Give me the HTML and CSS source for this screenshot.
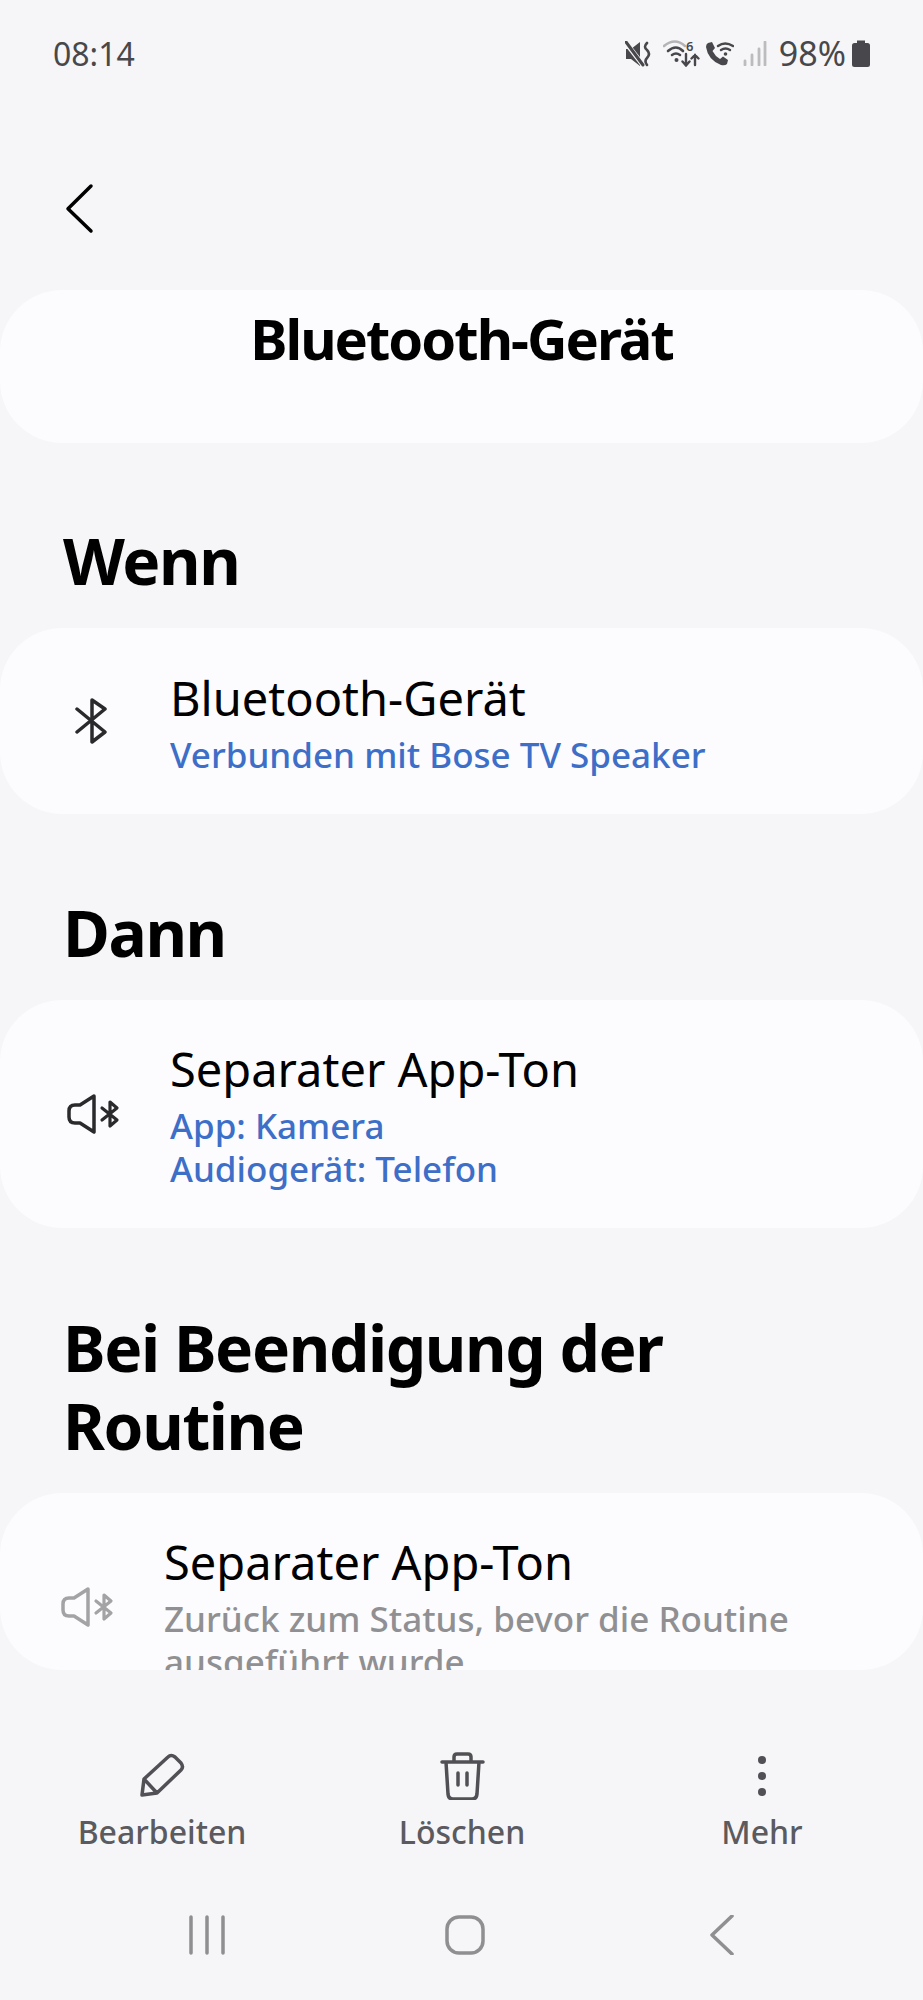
FILE: index.html
```html
<!DOCTYPE html>
<html lang="de">
<head>
  <meta charset="UTF-8" />
  <title>Bluetooth-Gerät</title>
  <link rel="stylesheet" href="styles.css">
</head>
<body>
  <div class="screen">
    <div class="statusbar">
      <span class="time">08:14</span>
      <div class="status-icons">
        <svg class="ic-mute" width="27" height="26" viewBox="0 0 27 26">
          <path d="M1 8 H6 L15 1 V25 L6 18 H1 Z" fill="#48484c"/>
          <path d="M1 2 L18 24" stroke="#f6f6f8" stroke-width="5"/>
          <path d="M1 1 L18 24" stroke="#48484c" stroke-width="3" stroke-linecap="round"/>
          <path d="M22 2 Q18 6 22 9 Q26 13 22 17 Q19 20 22 24" stroke="#48484c" stroke-width="2.6" fill="none" stroke-linecap="round"/>
        </svg>
        <svg class="ic-wifi6" width="38" height="27" viewBox="0 0 38 27">
          <path d="M1 6 Q12 -3 22 6" stroke="#b4b4b7" stroke-width="2.6" fill="none" stroke-linecap="round"/>
          <path d="M5 11 Q13 4 20 11 M9 15 Q13 12 17 15" stroke="#48484c" stroke-width="2.6" fill="none" stroke-linecap="round"/>
          <circle cx="13.500" cy="20" r="2" fill="#48484c"/>
          <text x="23" y="11" class="wifi-six">6</text>
          <path d="M23 14 V25 M19.500 21.500 L23 25.500 L26.500 21.500 M32 25 V15 M28.500 18.500 L32 15 L35.500 18.500" stroke="#48484c" stroke-width="2.4" fill="none" stroke-linecap="round"/>
        </svg>
        <svg class="ic-callwifi" width="29" height="26" viewBox="0 0 29 26">
          <path d="M3 2 L7 1 L10 7 L7.500 10 Q10 15 15 18 L18 15.500 L23 19 L22 23 Q20 25 16 24 Q3 19 1 6 Q1 3 3 2 Z" fill="#48484c"/>
          <path d="M13 5 Q20 0 28 5 M16 9 Q20.500 6 25 9" stroke="#48484c" stroke-width="2.4" fill="none" stroke-linecap="round"/>
          <circle cx="20.500" cy="13" r="1.800" fill="#48484c"/>
        </svg>
        <svg class="ic-signal" width="24" height="25" viewBox="0 0 24 25">
          <path d="M2 24 V20 M9 24 V14 M16 24 V8 M22 24 V1" stroke="#bcbcbf" stroke-width="2.800" stroke-linecap="round"/>
        </svg>
        <span class="battery-text">98%</span>
        <svg class="ic-battery" width="18" height="27" viewBox="0 0 18 27">
          <path d="M5 0.500 H13 V3 H15.500 Q18 3 18 5.500 V24.500 Q18 27 15.500 27 H2.500 Q0 27 0 24.500 V5.500 Q0 3 2.500 3 H5 Z" fill="#48484c"/>
        </svg>
      </div>
    </div>

    <div class="backrow">
      <svg width="30" height="52" viewBox="0 0 30 52">
        <path d="M26 3 L3 25.700 L26 48" stroke="#000" stroke-width="3.500" fill="none" stroke-linecap="round" stroke-linejoin="round"/>
      </svg>
    </div>

    <div class="card title-card">
      <span class="page-title">Bluetooth-Gerät</span>
    </div>

    <h2 class="section-title first">Wenn</h2>
    <div class="card row-card row-if">
      <div class="row-icon">
        <svg width="32" height="46" viewBox="0 0 32 46">
          <path d="M2 11 L30 34 L17 44 V2 L30 11 L2 34" stroke="#2a2a2c" stroke-width="3.500" fill="none" stroke-linecap="round" stroke-linejoin="round"/>
        </svg>
      </div>
      <div class="row-text">
        <div class="row-title">Bluetooth-Gerät</div>
        <div class="row-sub">Verbunden mit Bose TV Speaker</div>
      </div>
    </div>

    <h2 class="section-title">Dann</h2>
    <div class="card row-card row-then">
      <div class="row-icon speaker">
        <svg width="54" height="42" viewBox="0 0 54 42">
          <path d="M28 3 L14 12 H9 Q3 12 3 18 V24 Q3 30 9 30 H14 L28 39 Z" stroke="#2a2a2c" stroke-width="3.500" fill="none" stroke-linejoin="round"/>
          <path d="M36 15 L51 27 L44 33 V9 L51 15 L36 27" stroke="#2a2a2c" stroke-width="3.200" fill="none" stroke-linecap="round" stroke-linejoin="round"/>
        </svg>
      </div>
      <div class="row-text">
        <div class="row-title">Separater App-Ton</div>
        <div class="row-sub">App: Kamera</div>
        <div class="row-sub">Audiogerät: Telefon</div>
      </div>
    </div>

    <h2 class="section-title two-line">Bei Beendigung der<br>Routine</h2>
    <div class="card row-end">
      <div class="row-card row-end-inner">
        <div class="row-icon speaker-end">
          <svg width="54" height="42" viewBox="0 0 54 42">
            <path d="M28 3 L14 12 H9 Q3 12 3 18 V24 Q3 30 9 30 H14 L28 39 Z" stroke="#a3a3a6" stroke-width="3.500" fill="none" stroke-linejoin="round"/>
            <path d="M36 15 L51 27 L44 33 V9 L51 15 L36 27" stroke="#a3a3a6" stroke-width="3.200" fill="none" stroke-linecap="round" stroke-linejoin="round"/>
          </svg>
        </div>
        <div class="row-text">
          <div class="row-title">Separater App-Ton</div>
          <div class="row-sub grey">Zurück zum Status, bevor die Routine ausgeführt wurde</div>
        </div>
      </div>
    </div>

    <div class="actions">
      <div class="action">
        <svg width="46" height="48" viewBox="0 0 46 48">
          <path d="M5 27 L29 5 Q32 2 36 5 L42 11 Q45 15 42 18 L18 41 L3 43 Z M5 27 L18 41" stroke="#505055" stroke-width="3.500" fill="none" stroke-linejoin="round"/>
        </svg>
        <span>Bearbeiten</span>
      </div>
      <div class="action">
        <svg width="46" height="48" viewBox="0 0 46 48">
          <path d="M3 10 H44 M15 10 V5 Q15 2 18 2 H29 Q32 2 32 5 V10 M7 10 L9 42 Q9.500 47 14 47 H33 Q37.500 47 38 42 L40 10 M19 21 V33 M28 21 V33" stroke="#505055" stroke-width="3.500" fill="none" stroke-linecap="round" stroke-linejoin="round"/>
        </svg>
        <span>Löschen</span>
      </div>
      <div class="action">
        <svg width="46" height="48" viewBox="0 0 46 48">
          <circle cx="23" cy="8" r="4" fill="#505055"/>
          <circle cx="23" cy="24" r="4" fill="#505055"/>
          <circle cx="23" cy="40" r="4" fill="#505055"/>
        </svg>
        <span>Mehr</span>
      </div>
    </div>

    <div class="navbar">
      <div class="nav-item">
        <svg width="40" height="40" viewBox="0 0 40 40">
          <path d="M4 2 V38 M20 2 V38 M36 2 V38" stroke="#8f8f91" stroke-width="3.500" stroke-linecap="round"/>
        </svg>
      </div>
      <div class="nav-item">
        <svg width="40" height="40" viewBox="0 0 40 40">
          <rect x="2" y="2" width="36" height="36" rx="12" stroke="#8f8f91" stroke-width="3.500" fill="none"/>
        </svg>
      </div>
      <div class="nav-item">
        <svg width="40" height="40" viewBox="0 0 40 40">
          <path d="M29 1 L9 20 L29 39" stroke="#8f8f91" stroke-width="3.500" fill="none" stroke-linecap="round" stroke-linejoin="round"/>
        </svg>
      </div>
    </div>
  </div>
</body>
</html>
```

FILE: styles.css
```css
* {
  box-sizing: border-box;
}
body {
  margin: 0;
  background: #f6f6f8;
  font-family: "Noto Sans", "Open Sans", sans-serif;
  color: #000;
}
.screen {
  width: 923px;
  height: 2000px;
  overflow: hidden;
}
.statusbar {
  height: 107px;
  padding: 40px 53px 0 53px;
  display: flex;
  justify-content: space-between;
  align-items: flex-start;
  color: #48484c;
}
.time {
  font-size: 32px;
  line-height: 27px;
}
.status-icons {
  display: flex;
  align-items: center;
  height: 27px;
}
.ic-mute {
  margin-right: 11px;
}
.ic-wifi6 {
  margin-right: 4px;
}
.ic-callwifi {
  margin-right: 9px;
}
.ic-signal {
  margin-right: 12px;
}
.battery-text {
  font-size: 34px;
  line-height: 27px;
  margin-right: 6px;
}
.wifi-six {
  font-size: 13px;
  font-weight: 600;
  fill: #48484c;
}
.backrow {
  height: 183px;
  padding: 76px 0 0 65px;
}
.card {
  background: #fcfcfe;
  border-radius: 62px;
}
.title-card {
  height: 153px;
  display: flex;
  justify-content: center;
  padding-top: 8px;
}
.page-title {
  font-size: 56px;
  font-weight: 700;
  line-height: 80px;
  letter-spacing: -2px;
}
.section-title {
  margin: 79px 0 27px;
  padding: 0 0 0 63px;
  font-size: 64px;
  font-weight: 700;
  line-height: 80px;
  letter-spacing: -1.4px;
}
.section-title.first {
  margin: 78px 0 27px;
}
.section-title.two-line {
  margin: 81px 0 28px;
  line-height: 78px;
}
.row-card {
  display: flex;
  align-items: center;
}
.row-if {
  height: 186px;
}
.row-then {
  height: 228px;
}
.row-end {
  height: 177px;
  overflow: hidden;
}
.row-end-inner {
  height: 228px;
}
.row-icon {
  width: 170px;
  padding-left: 75px;
  display: flex;
}
.row-icon.speaker {
  padding-left: 66px;
}
.row-icon.speaker-end {
  width: 164px;
  padding-left: 60px;
}
.row-text {
  flex: 1;
  padding-right: 100px;
}
.row-title {
  font-size: 47px;
  line-height: 62px;
  margin-bottom: 4px;
}
.row-sub {
  font-size: 35px;
  font-weight: 500;
  line-height: 43px;
  color: #3d6fc8;
}
.row-sub.grey {
  color: #909093;
}
.actions {
  display: flex;
  padding: 82px 11px 0 12px;
}
.action {
  flex: 1;
  display: flex;
  flex-direction: column;
  align-items: center;
  gap: 10px;
  font-size: 32px;
  font-weight: 500;
  line-height: 44px;
  color: #5a5a5f;
}
.navbar {
  display: grid;
  grid-template-columns: repeat(3, 258px);
  padding: 61px 0 0 78px;
}
.nav-item {
  display: flex;
  justify-content: center;
}
```
